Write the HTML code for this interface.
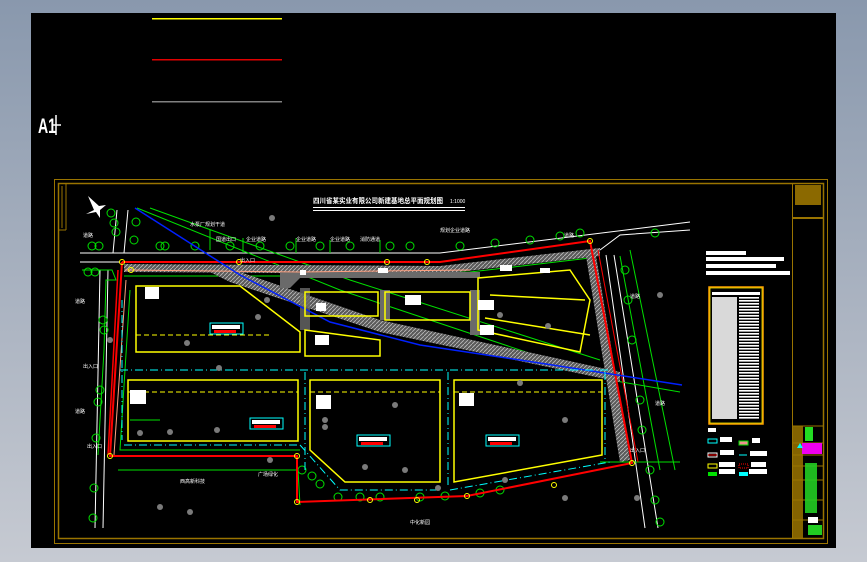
<!DOCTYPE html>
<html><head><meta charset="utf-8"><style>
html,body{margin:0;padding:0;width:867px;height:562px;overflow:hidden;background:linear-gradient(180deg,#8998ad 0%,#aeb6c3 60%,#c6cad2 100%);}
svg{position:absolute;left:0;top:0;}
text{font-family:"Liberation Sans","Noto Sans CJK SC",sans-serif;}
</style></head><body>
<svg width="867" height="562" viewBox="0 0 867 562" xmlns="http://www.w3.org/2000/svg">
<defs>
<pattern id="st" width="4" height="3" patternUnits="userSpaceOnUse"><rect width="4" height="1.6" fill="#fff"/></pattern>
<pattern id="hx" width="4" height="4" patternUnits="userSpaceOnUse"><rect width="4" height="4" fill="#5a5a5a"/><path d="M0 4L4 0" stroke="#bbb" stroke-width="0.8"/></pattern>
</defs>
<rect x="31" y="13" width="805" height="535" fill="#000"/>
<rect x="152" y="18" width="130" height="1.5" fill="#ffff00"/>
<rect x="152" y="59" width="130" height="1.5" fill="#e00000"/>
<rect x="152" y="101" width="130" height="1.5" fill="#808080"/>
<text x="38" y="133" fill="#fff" font-size="21" font-weight="bold" textLength="18" lengthAdjust="spacingAndGlyphs">A1</text>
<path d="M56 115V135M52 125H61" stroke="#fff" stroke-width="1.5"/>
<!-- frame -->
<rect x="54.5" y="179.5" width="773" height="364" fill="none" stroke="#9a7400" stroke-width="1"/>
<rect x="58.5" y="183.5" width="765" height="355" fill="none" stroke="#9a7400" stroke-width="1.5"/>
<path d="M66 183V230M62 186V228M58 230H66" stroke="#9a7400" stroke-width="1"/>
<line x1="792.5" y1="183" x2="792.5" y2="539" stroke="#9a7400"/>
<rect x="795" y="185" width="26" height="20" fill="#9a7400" opacity="0.9"/>
<path d="M793 218H823" stroke="#9a7400" stroke-width="2"/>
<path d="M793 426H823M793 443H823M793 455H823M793 466H823M793 480H823M793 500H823M793 520H823" stroke="#9a7400" stroke-width="1"/>
<rect x="793" y="426" width="10" height="112" fill="#9a7400" opacity="0.85"/>
<rect x="805" y="427" width="8" height="14" fill="#22dd22"/>
<rect x="802" y="443" width="20" height="11" fill="#ee00ee"/>
<rect x="805" y="463" width="12" height="50" fill="#22cc22" opacity="0.9"/>
<rect x="808" y="525" width="14" height="10" fill="#22cc22"/>
<rect x="808" y="517" width="10" height="6" fill="#fff"/>
<path d="M797 448l3-5 3 5z" fill="#00ffff"/>
<!-- title -->
<text x="313" y="203" fill="#fff" font-size="7" font-weight="bold" textLength="130" lengthAdjust="spacingAndGlyphs">四川省某实业有限公司新建基地总平面规划图</text>
<text x="450" y="203" fill="#fff" font-size="5">1:1000</text>
<path d="M313 207.5H465M313 210.5H465" stroke="#fff" stroke-width="1"/>
<!-- north arrow -->
<path d="M88 196l6 14-8 4 10-2 4 6 0-8 6-5-7 1z" fill="#fff"/>
<!-- roads white -->
<g stroke="#fff" stroke-width="1" fill="none">
<path d="M80 253H440L690 222"/>
<path d="M80 262H120"/>
<path d="M117 210L113 253"/>
<path d="M128 210L124 253"/>
<path d="M100 270L95 528"/>
<path d="M108 270L103 528"/>
<path d="M606 255L645 528M614 255L658 528"/>
<path d="M600 250L620 235L690 230"/>
</g>
<!-- green lines -->
<g stroke="#00e000" stroke-width="1" fill="none">
<path d="M82 270H112L116 280L106 280L104 350L98 455"/>
<path d="M137 208L340 290L610 380L680 392"/>
<path d="M150 208L350 280L600 360"/>
<path d="M124 276H300L470 272L590 258"/>
<path d="M130 290L120 450H300"/>
<path d="M118 470H298"/>
<path d="M298 470L300 505"/>
<path d="M620 256L660 470M630 250L675 470"/>
<path d="M600 462L680 462"/>
<path d="M210 230V250M243 238V253M296 238V253M330 240V253M380 240V253"/>
<path d="M130 420H160"/>
</g>
<!-- trees -->
<g stroke="#00e000" stroke-width="1" fill="none">
<circle cx="92" cy="246" r="4"/><circle cx="99" cy="246" r="4"/><circle cx="111" cy="213" r="4"/><circle cx="114" cy="223" r="4"/><circle cx="116" cy="232" r="4"/>
<circle cx="136" cy="222" r="4"/><circle cx="134" cy="240" r="4"/><circle cx="160" cy="246" r="4"/><circle cx="165" cy="246" r="4"/><circle cx="195" cy="246" r="4"/>
<circle cx="230" cy="246" r="4"/><circle cx="260" cy="246" r="4"/><circle cx="290" cy="246" r="4"/><circle cx="320" cy="246" r="4"/><circle cx="350" cy="246" r="4"/><circle cx="390" cy="246" r="4"/><circle cx="410" cy="246" r="4"/>
<circle cx="460" cy="246" r="4"/><circle cx="495" cy="243" r="4"/><circle cx="530" cy="240" r="4"/><circle cx="560" cy="236" r="4"/><circle cx="580" cy="233" r="4"/><circle cx="655" cy="233" r="4"/>
<circle cx="88" cy="272" r="4"/><circle cx="95" cy="272" r="4"/><circle cx="103" cy="320" r="4"/><circle cx="104" cy="330" r="4"/><circle cx="100" cy="390" r="4"/><circle cx="98" cy="402" r="4"/><circle cx="96" cy="438" r="4"/><circle cx="94" cy="488" r="4"/><circle cx="93" cy="518" r="4"/>
<circle cx="625" cy="270" r="4"/><circle cx="628" cy="300" r="4"/><circle cx="632" cy="340" r="4"/><circle cx="640" cy="400" r="4"/><circle cx="642" cy="430" r="4"/><circle cx="650" cy="470" r="4"/><circle cx="655" cy="500" r="4"/><circle cx="660" cy="522" r="4"/>
<circle cx="302" cy="470" r="4"/><circle cx="312" cy="476" r="4"/><circle cx="320" cy="484" r="4"/><circle cx="338" cy="497" r="4"/><circle cx="360" cy="497" r="4"/><circle cx="380" cy="497" r="4"/><circle cx="420" cy="497" r="4"/><circle cx="445" cy="496" r="4"/><circle cx="480" cy="493" r="4"/><circle cx="500" cy="490" r="4"/>
</g>
<!-- gray hatched road bands -->
<g fill="url(#hx)">
<path d="M124 264L440 266L600 248L600 256L440 274L124 272z"/>
<path d="M210 272L240 272L380 320L620 372L620 382L380 332L230 282z"/>
<path d="M585 250L595 250L630 460L620 462z"/>
</g>
<g fill="#6a6a6a">
<path d="M280 272H480V278H300L290 288H280z"/>
<path d="M300 288H310V330H300z" opacity="0.8"/>
<path d="M380 290H390V320H380z"/>
<path d="M470 290H480V335H470z"/>
</g>
<!-- red boundary -->
<g stroke="#ff0000" stroke-width="2" fill="none">
<path d="M122 262L440 262L590 241L632 463L467 496L297 502V456H110L122 262"/>
<path d="M118 270L108 455" stroke-width="1.5"/>
<path d="M598 250L638 462" stroke-width="1"/>
</g>
<path d="M125 270L300 272L470 270M126 280L114 455" stroke="#ffa080" stroke-width="1" fill="none"/>
<!-- blue pipe -->
<path d="M135 208L240 275L330 322L420 345L520 360L682 385" stroke="#0020ff" stroke-width="1.5" fill="none"/>
<!-- cyan dash-dot -->
<g stroke="#00ffff" stroke-width="1" fill="none" stroke-dasharray="8,3,1,3">
<path d="M120 370H610"/>
<path d="M124 445H298"/>
<path d="M300 445L340 490H440"/>
<path d="M450 490L610 462"/>
<path d="M122 300V440"/>
<path d="M305 372V470M448 372V488M605 372V460"/>
</g>
<!-- yellow blocks -->
<g stroke="#ffff00" stroke-width="1.5" fill="none">
<path d="M136 286H240L300 332V352H136z"/>
<path d="M128 380H298V441H128z"/>
<path d="M310 380H440V482H345L310 450z"/>
<path d="M454 380H602V455L454 482z"/>
<path d="M305 292H378V316H305z"/>
<path d="M385 292H470V320H385z"/>
<path d="M305 330L380 340V356H305z"/>
<path d="M478 278L570 270L590 300L580 352L478 330z"/>
<path d="M490 295L585 300M485 318L590 335"/>
</g>
<g stroke="#ffff00" stroke-width="1" stroke-dasharray="5,3" fill="none">
<path d="M128 392H298M310 392H440M454 392H602M136 335H270"/>
</g>
<!-- label boxes -->
<g>
<rect x="210" y="323" width="33" height="11" fill="none" stroke="#00ffff"/><rect x="212" y="325" width="28" height="4" fill="#fff"/><rect x="214" y="330" width="22" height="3" fill="#ff0000"/>
<rect x="250" y="418" width="33" height="11" fill="none" stroke="#00ffff"/><rect x="252" y="420" width="28" height="4" fill="#fff"/><rect x="254" y="425" width="22" height="3" fill="#ff0000"/>
<rect x="357" y="435" width="33" height="11" fill="none" stroke="#00ffff"/><rect x="359" y="437" width="28" height="4" fill="#fff"/><rect x="361" y="442" width="22" height="3" fill="#ff0000"/>
<rect x="486" y="435" width="33" height="11" fill="none" stroke="#00ffff"/><rect x="488" y="437" width="28" height="4" fill="#fff"/><rect x="490" y="442" width="22" height="3" fill="#ff0000"/>
</g>
<!-- white labels -->
<g fill="#fff">
<rect x="145" y="287" width="14" height="12"/><rect x="130" y="390" width="16" height="14"/><rect x="316" y="395" width="15" height="14"/><rect x="459" y="393" width="15" height="13"/>
<rect x="315" y="335" width="14" height="10"/><rect x="405" y="295" width="16" height="10"/><rect x="478" y="300" width="16" height="10"/><rect x="480" y="325" width="14" height="10"/><rect x="500" y="265" width="12" height="6"/><rect x="540" y="268" width="10" height="5"/>
<rect x="316" y="303" width="10" height="8"/><rect x="378" y="268" width="10" height="5"/><rect x="300" y="270" width="6" height="5"/>
</g>
<g fill="#fff" font-size="5">
<text x="190" y="226">水泵厂规划干道</text><text x="216" y="241">国道出口</text><text x="246" y="241">企业道路</text><text x="296" y="241">企业道路</text><text x="330" y="241">企业道路</text><text x="360" y="241">消防通道</text>
<text x="83" y="237">道路</text><text x="440" y="232">规划企业道路</text><text x="564" y="237">道路</text>
<text x="240" y="262">出入口</text><text x="83" y="368">出入口</text><text x="87" y="448">出入口</text><text x="630" y="452">出入口</text>
<text x="180" y="483">西高新科技</text><text x="410" y="524">中化新园</text><text x="258" y="476">广场绿化</text>
<text x="75" y="303">道路</text><text x="75" y="413">道路</text><text x="630" y="298">道路</text><text x="655" y="405">道路</text>
</g>
<!-- scattered gray -->
<g fill="#7a7a7a">
<circle cx="272" cy="218" r="3"/><circle cx="267" cy="300" r="3"/><circle cx="258" cy="317" r="3"/><circle cx="187" cy="343" r="3"/><circle cx="219" cy="368" r="3"/><circle cx="140" cy="433" r="3"/><circle cx="170" cy="432" r="3"/><circle cx="217" cy="430" r="3"/><circle cx="160" cy="507" r="3"/><circle cx="190" cy="512" r="3"/><circle cx="270" cy="460" r="3"/>
<circle cx="325" cy="420" r="3"/><circle cx="325" cy="427" r="3"/><circle cx="365" cy="467" r="3"/><circle cx="395" cy="405" r="3"/><circle cx="405" cy="470" r="3"/><circle cx="438" cy="488" r="3"/><circle cx="520" cy="383" r="3"/><circle cx="565" cy="420" r="3"/><circle cx="565" cy="498" r="3"/><circle cx="505" cy="480" r="3"/><circle cx="637" cy="498" r="3"/><circle cx="500" cy="315" r="3"/><circle cx="548" cy="326" r="3"/><circle cx="660" cy="295" r="3"/><circle cx="110" cy="340" r="3"/>
</g>
<!-- notes & legend -->
<g fill="#fff">
<rect x="706" y="251" width="40" height="4"/><rect x="706" y="257" width="78" height="4"/><rect x="706" y="264" width="70" height="4"/><rect x="706" y="271" width="84" height="4"/>
</g>
<rect x="709" y="287" width="54" height="137" fill="none" stroke="#ffa000" stroke-width="1.5"/>
<rect x="710" y="288" width="52" height="135" fill="none" stroke="#ffff00" stroke-width="0.7"/>
<g fill="#fff">
<rect x="712" y="292" width="48" height="3"/>
<rect x="712" y="297" width="25" height="122" opacity="0.85"/>
<rect x="739" y="297" width="20" height="122" fill="url(#st)"/>
</g>
<g>
<rect x="708" y="428" width="8" height="4" fill="#fff"/>
<rect x="708" y="439" width="9" height="4" fill="none" stroke="#00ffff"/><rect x="720" y="437" width="12" height="5" fill="#fff"/>
<rect x="739" y="441" width="9" height="4" fill="#f09090" stroke="#00e000"/><rect x="752" y="438" width="8" height="5" fill="#fff"/>
<rect x="708" y="453" width="9" height="4" fill="none" stroke="#fff"/><line x1="708" y1="455" x2="717" y2="455" stroke="#f00"/><rect x="720" y="450" width="14" height="5" fill="#fff"/>
<line x1="739" y1="455" x2="747" y2="455" stroke="#00ffff"/><rect x="750" y="451" width="17" height="5" fill="#fff"/>
<rect x="708" y="464" width="9" height="4" fill="none" stroke="#ffff00"/><rect x="719" y="462" width="16" height="5" fill="#fff"/>
<rect x="739" y="464" width="9" height="4" fill="none" stroke="#f00" stroke-dasharray="1,1"/><rect x="751" y="462" width="15" height="5" fill="#fff"/>
<rect x="708" y="472" width="9" height="4" fill="#00e000"/><rect x="719" y="469" width="16" height="5" fill="#fff"/>
<rect x="739" y="472" width="9" height="4" fill="#00ffff"/><rect x="749" y="469" width="18" height="5" fill="#fff"/>
</g>
<!-- yellow circle markers -->
<g stroke="#ffff00" fill="none" stroke-width="1">
<circle cx="122" cy="262" r="2.5"/><circle cx="131" cy="270" r="2.5"/><circle cx="239" cy="262" r="2.5"/><circle cx="387" cy="262" r="2.5"/><circle cx="427" cy="262" r="2.5"/><circle cx="590" cy="241" r="2.5"/><circle cx="632" cy="463" r="2.5"/><circle cx="554" cy="485" r="2.5"/><circle cx="467" cy="496" r="2.5"/><circle cx="297" cy="456" r="2.5"/><circle cx="297" cy="502" r="2.5"/><circle cx="110" cy="456" r="2.5"/><circle cx="370" cy="500" r="2.5"/><circle cx="417" cy="500" r="2.5"/>
</g>
</svg>
</body></html>
